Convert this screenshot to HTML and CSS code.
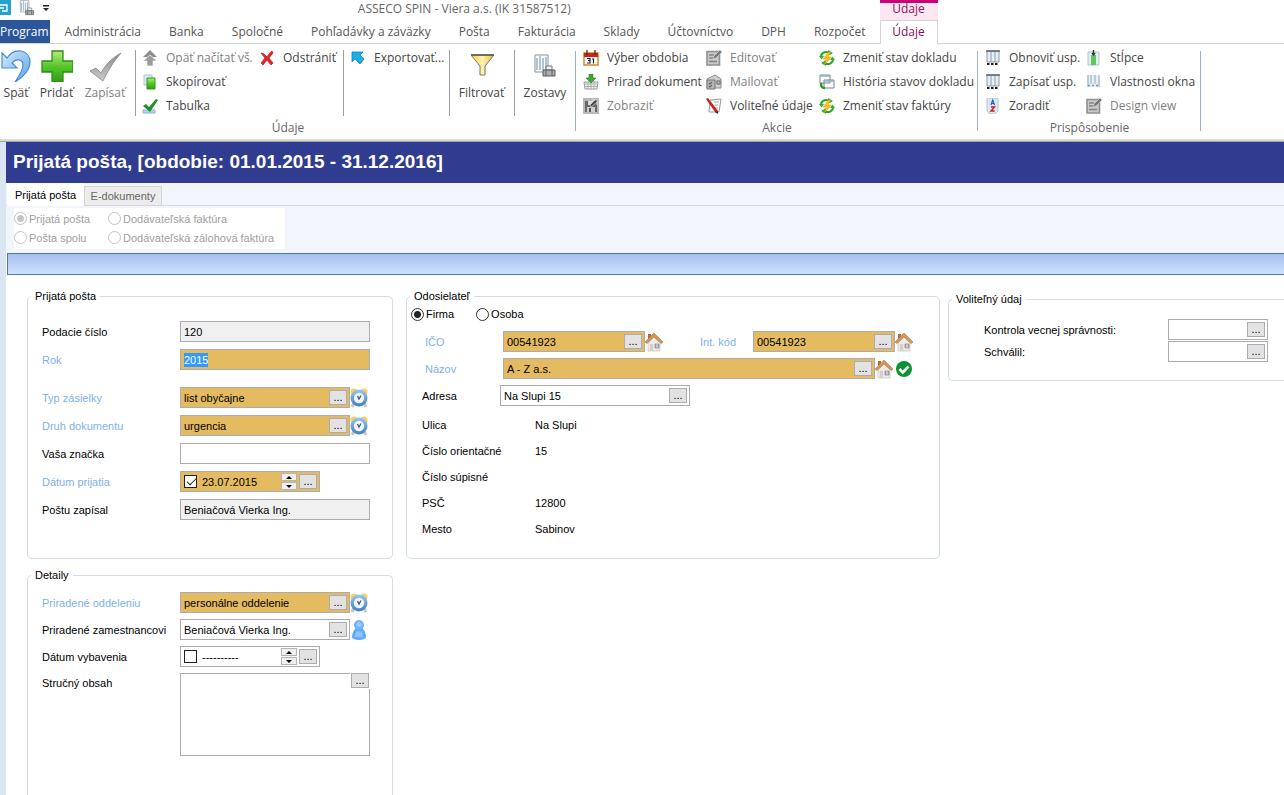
FILE: index.html
```html
<!DOCTYPE html>
<html lang="sk">
<head>
  <meta charset="UTF-8">
  <meta name="viewport" content="width=device-width, initial-scale=1.0">
  <title>ASSECO SPIN - Viera a.s.</title>
  <link rel="stylesheet" href="styles.css">
</head>
<body>
  <!-- Shared icons -->
  <svg class="icon-defs" aria-hidden="true">
    <defs>
      <linearGradient id="gGreen" x1="0" y1="0" x2="0" y2="1">
        <stop offset="0" stop-color="#b5ec7c"/><stop offset="0.5" stop-color="#56c52c"/><stop offset="1" stop-color="#2f9e12"/>
      </linearGradient>
      <linearGradient id="gBlue" x1="0" y1="0" x2="1" y2="1">
        <stop offset="0" stop-color="#d5ecff"/><stop offset="1" stop-color="#5aa5ea"/>
      </linearGradient>
      <linearGradient id="gGrey" x1="0" y1="0" x2="0" y2="1">
        <stop offset="0" stop-color="#8f8f8f"/><stop offset="1" stop-color="#c8c8c8"/>
      </linearGradient>
      <linearGradient id="gGold" x1="0" y1="0" x2="1" y2="0">
        <stop offset="0" stop-color="#f5cf3f"/><stop offset="0.5" stop-color="#fff3b5"/><stop offset="1" stop-color="#e9b92c"/>
      </linearGradient>
      <linearGradient id="gClock" x1="0" y1="0" x2="0" y2="1">
        <stop offset="0" stop-color="#9cc6ee"/><stop offset="1" stop-color="#3f7fc0"/>
      </linearGradient>
    </defs>
    <symbol id="i-clock" viewBox="0 0 18 20">
      <path d="M4 15l-2 4M14 15l2 4" stroke="#c3c6ca" stroke-width="3"/>
      <circle cx="4" cy="4" r="3.600" fill="#f9cf68"/>
      <circle cx="14" cy="4" r="3.600" fill="#f9cf68"/>
      <circle cx="9" cy="10" r="8.500" fill="url(#gClock)"/>
      <circle cx="9" cy="10" r="5.200" fill="#f1f7fc"/>
      <path d="M7.500 8l1.500 3 2-3.500" fill="none" stroke="#38597c" stroke-width="1.300"/>
    </symbol>
    <symbol id="i-house" viewBox="0 0 18 20">
      <path d="M3 2h3v6H3z" fill="#a86b3a"/>
      <path d="M3 9l6-5 6 5v10H3z" fill="#eceae8" stroke="#c5c1bc" stroke-width="0.7"/>
      <path d="M0 10L9 1l9 9-2 1.500L9 5l-7 6.500z" fill="#d39558" stroke="#ad7240" stroke-width="0.6"/>
      <path d="M5 12h3v7H5z" fill="#d3cfc9"/>
      <path d="M10 12h4v4h-4z" fill="#a9aeb5" stroke="#85878a" stroke-width="0.7"/>
      <path d="M12 12v4" stroke="#fff" stroke-width="0.6"/>
    </symbol>
    <symbol id="i-ok" viewBox="0 0 16 16">
      <circle cx="8" cy="8" r="8" fill="#0b9436"/>
      <path d="M3.500 8l3.200 3.500L12.500 5.500" fill="none" stroke="#fff" stroke-width="2.600"/>
    </symbol>
    <symbol id="i-person" viewBox="0 0 14 20">
      <path d="M7 6c3 0 7 6 7 11 0 4-14 4-14 0C0 12 4 6 7 6z" fill="#64aafc"/>
      <circle cx="7" cy="5" r="5" fill="#6fb1fb"/>
      <circle cx="7" cy="4.500" r="2.500" fill="#9dcbff"/>
      <path d="M3 17c0-4 1.500-6 4-6s4 2 4 6z" fill="#8fc3ff"/>
    </symbol>
    <symbol id="i-edit" viewBox="0 0 16 16">
      <path d="M1 1.500h12.500v13.500H1z" fill="#c9c9c9" stroke="#909090" stroke-width="1.600"/>
      <path d="M3 5h5M3 8h5M3 11.500h8" stroke="#858585" stroke-width="1.300"/>
      <path d="M7 9l1-3 6-6 2 2-6 6z" fill="#777" stroke="#e4e4e4" stroke-width="0.5"/>
    </symbol>
    <symbol id="i-state" viewBox="0 0 16 16">
      <path d="M2 7C2 3 6 1 10 2.500M14 9c0 4-4 6-8 4.500" fill="none" stroke="#23a823" stroke-width="2"/>
      <path d="M9 0l5 3-5 3zM7 16l-5-3 5-3zM0 6h5L2.500 9.500zM16 10h-5l2.500-3.500z" fill="#2fb32b"/>
      <path d="M9.500 2L4 9h3.500l-2 5.500L12.500 7H9l2.500-5z" fill="#ffc41f" stroke="#e09a18" stroke-width="0.6"/>
    </symbol>
    <symbol id="i-columns" viewBox="0 0 16 16">
      <path d="M2 1h12v11H2z" fill="#e3eef7" stroke="#8e99a5" stroke-width="1"/>
      <path d="M1 1h14" stroke="#414b56" stroke-width="1.200"/>
      <path d="M6 2v10M10 2v10" stroke="#8d9aa8"/>
      <path d="M2 14h12" stroke="#222" stroke-width="2" stroke-dasharray="2.500 1.500"/>
    </symbol>
    <symbol id="i-report" viewBox="0 0 24 24">
      <path d="M2 1h13v17H2z" fill="#fff" stroke="#8c9297"/>
      <path d="M4 4v12M7 2v14M10 4v12M13 3v13" stroke="#9fb4c6" stroke-width="1.600"/>
      <path d="M13 12h6v4h-6z" fill="#eef1f3" stroke="#777"/>
      <path d="M10 16h12v6H10z" fill="#a9adb0" stroke="#53585c"/>
      <path d="M13 16v6M19 16v6" stroke="#5d6265"/>
    </symbol>
  </svg>

  <!-- Title bar and ribbon tabs -->
  <header class="top">
    <div class="top-main">
      <div class="title-bar">
        <svg class="app-icon" viewBox="0 0 11 15"><path d="M0 0h11v15H0z" fill="#26a1cb"/><path d="M0 5h7v6H2M0 8h4" fill="none" stroke="#fff" stroke-width="1.300"/></svg>
        <svg class="quick-icon" viewBox="0 0 24 24"><use href="#i-report"/></svg>
        <svg class="more-icon" viewBox="0 0 6 7"><path d="M0 0h6v1.500H0zM0 3h6L3 6z" fill="#222"/></svg>
        <span class="title-text">ASSECO SPIN - Viera a.s. (IK 31587512)</span>
      </div>
      <nav class="tabs">
        <a class="tab program" href="#">Program</a>
        <a class="tab" href="#">Administrácia</a>
        <a class="tab" href="#">Banka</a>
        <a class="tab" href="#">Spoločné</a>
        <a class="tab" href="#">Pohľadávky a záväzky</a>
        <a class="tab" href="#">Pošta</a>
        <a class="tab" href="#">Fakturácia</a>
        <a class="tab" href="#">Sklady</a>
        <a class="tab" href="#">Účtovníctvo</a>
        <a class="tab" href="#">DPH</a>
        <a class="tab" href="#">Rozpočet</a>
      </nav>
    </div>
    <div class="context">
      <div class="context-title">Údaje</div>
      <a class="context-tab" href="#">Údaje</a>
    </div>
    <div class="top-rest"></div>
  </header>

  <!-- Ribbon -->
  <div class="ribbon">
    <section class="group">
      <div class="group-body">
        <div class="big-buttons">
          <button class="big back">
            <svg viewBox="0 0 32 32"><path d="M2 3v15h15l-5-5c4-5 11-4 11 2 0 6-4 11-8 17 9-5 15-13 15-20C30-1 14-3 7 8z" fill="url(#gBlue)" stroke="#4a8bd0" stroke-width="1.200"/></svg>
            Späť
          </button>
          <button class="big add">
            <svg viewBox="0 0 32 32"><path d="M11 1h11v10h10v11H22v10H11V22H1V11h10z" fill="url(#gGreen)" stroke="#2b8f16" stroke-width="1.300"/></svg>
            Pridať
          </button>
          <button class="big save" disabled>
            <svg viewBox="0 0 32 32"><path d="M1 21l6-3 5 5C17 14 23 8 32 3 25 11 19 20 14 31z" fill="url(#gGrey)" stroke="#858585" stroke-width="0.8"/></svg>
            Zapísať
          </button>
        </div>
        <div class="commands data-commands">
          <button class="cmd" disabled><svg viewBox="0 0 16 16"><path d="M8 0l7 7h-4v2H5V7H1z" fill="#8d8d8d"/><path d="M8 5l7 6h-4v5H5v-5H1z" fill="#9c9c9c" stroke="#fff" stroke-width="0.7"/></svg>Opäť načítať vš.</button>
          <button class="cmd"><svg viewBox="0 0 16 16"><path d="M2 3c3 0 5 3 6 4 2-3 3-5 5-6l1 2-4 5 4 5-2 2-4-5-4 5-2-2 4-5z" fill="#e02828" stroke="#b91818" stroke-width="0.7"/></svg>Odstrániť</button>
          <button class="cmd"><svg viewBox="0 0 16 16"><path d="M2 1h8v10H2z" fill="#dceaf6" stroke="#aac4dc"/><path d="M5 4h8v11H5z" fill="url(#gGreen)" stroke="#2b9a17"/></svg>Skopírovať</button>
          <span></span>
          <button class="cmd"><svg viewBox="0 0 16 16"><path d="M1 12h12v3H1z" fill="#b7d0ec" stroke="#8fb1d8"/><path d="M1 8l3-2 3 3 7-8 2 1-8 12z" fill="#1f8f28"/></svg>Tabuľka</button>
        </div>
        <div class="commands export-commands">
          <button class="cmd"><svg viewBox="0 0 16 16"><path d="M2 2h11l-3 3 4 4-4 5-5-5-3 3z" fill="#18aee8" stroke="#0c86bd" stroke-width="0.8"/></svg>Exportovať...</button>
        </div>
        <div class="big-buttons split filter-box">
          <button class="big"><svg viewBox="0 0 32 32"><path d="M5 5h23l-9 11v9h-5v-9z" fill="url(#gGold)" stroke="#777" stroke-width="1"/><path d="M5 5h23" stroke="#555" stroke-width="1.500"/></svg>Filtrovať</button>
        </div>
        <div class="big-buttons split report-box">
          <button class="big"><svg viewBox="-4 -4 32 32"><use href="#i-report" width="24" height="24"/></svg>Zostavy</button>
        </div>
      </div>
      <div class="group-name">Údaje</div>
    </section>

    <section class="group">
      <div class="group-body">
        <div class="commands action-commands">
          <button class="cmd"><svg viewBox="0 0 16 16"><path d="M1 3h14v12H1z" fill="#fff" stroke="#d28c22" stroke-width="1.500"/><path d="M1 3h14v4H1z" fill="#d3221c"/><path d="M4 0v5M12 0v5" stroke="#333" stroke-width="1.300"/><path d="M4 8.500h3v2H5h2v2.500H4M9 9h1.500v4.500" fill="none" stroke="#222" stroke-width="1.200"/></svg>Výber obdobia</button>
          <button class="cmd" disabled><svg viewBox="0 0 16 16"><use href="#i-edit"/></svg>Editovať</button>
          <button class="cmd"><svg viewBox="0 0 16 16"><use href="#i-state"/></svg>Zmeniť stav dokladu</button>
          <button class="cmd"><svg viewBox="0 0 16 16"><path d="M1 8h14l-1 7H2z" fill="#f3f3f3" stroke="#999"/><path d="M2 10h12M2 12.500h12M5 8v7M8 8v7M11 8v7" stroke="#a2a2a2" stroke-width="0.8"/><path d="M6 0h4v4h3L8 9 3 4h3z" fill="#3aa935" stroke="#23801f" stroke-width="0.6"/></svg>Priraď dokument</button>
          <button class="cmd" disabled><svg viewBox="0 0 16 16"><path d="M1 5l8-4 6 4v9H1z" fill="#cfcfcf" stroke="#8c8c8c"/><path d="M1 6h8v9H1z" fill="#b5b5b5" stroke="#777"/><path d="M3 9l1 1 2-2M3 12l1 1 2-2M11 7h3v3h-3z" fill="none" stroke="#666" stroke-width="1.100"/></svg>Mailovať</button>
          <button class="cmd"><svg viewBox="0 0 16 16"><path d="M1 1h10v8H1zM5 6h10v8H5z" fill="#fff" stroke="#78838d"/><path d="M1 2h10M5 7h10" stroke="#8fb1cf" stroke-width="1.500"/><path d="M2 9c0 4 1 5 4 5" fill="none" stroke="#1f9e2c" stroke-width="2.400"/></svg>História stavov dokladu</button>
          <button class="cmd" disabled><svg viewBox="0 0 16 16"><path d="M0 0h16v16H0z" fill="#b9b9b9"/><path d="M2 3h12v11H2z" fill="#686868"/><path d="M5 3h5v4H5z" fill="#ddd"/><path d="M4 9h8v5H4z" fill="#cfcfcf"/><path d="M7 7l5-5H9h5v5-3L8 9z" fill="#444" stroke="#e4e4e4" stroke-width="0.6"/><path d="M6 10h2v4H6z" fill="#555"/></svg>Zobraziť</button>
          <button class="cmd"><svg viewBox="0 0 16 16"><path d="M4 2l11-1-2 13H3z" fill="#fafafa" stroke="#999"/><path d="M8 4h5M9 7h3M9 10h3" stroke="#aaa"/><path d="M0 1l2-1 10 13-1 2-2-1z" fill="#c9211e"/><path d="M9 14l3-1 0 3z" fill="#333"/></svg>Voliteľné údaje</button>
          <button class="cmd"><svg viewBox="0 0 16 16"><use href="#i-state"/></svg>Zmeniť stav faktúry</button>
        </div>
      </div>
      <div class="group-name">Akcie</div>
    </section>

    <section class="group">
      <div class="group-body">
        <div class="commands view-commands">
          <button class="cmd"><svg viewBox="0 0 16 16"><use href="#i-columns"/></svg>Obnoviť usp.</button>
          <button class="cmd"><svg viewBox="0 0 16 16"><path d="M2 2h11v13H2z" fill="#e4edf5" stroke="#b5c4d2"/><path d="M5 5h5v10H5z" fill="#5dc957"/><path d="M7.500 0v5M6 3l1.500 2L9 3" fill="none" stroke="#333" stroke-width="1.300"/></svg>Stĺpce</button>
          <button class="cmd"><svg viewBox="0 0 16 16"><use href="#i-columns"/></svg>Zapísať usp.</button>
          <button class="cmd"><svg viewBox="0 0 16 16"><path d="M1 1h13v12H1z" fill="#e6eef6"/><path d="M2 1v12M5 1v9M9 1v9M13 1v12" stroke="#a9bacb" stroke-width="1.300"/><path d="M2 11.500h12" stroke="#8090a0" stroke-width="1.500" stroke-dasharray="2 2"/></svg>Vlastnosti okna</button>
          <button class="cmd"><svg viewBox="0 0 16 16"><path d="M2 0h11v13l-3 3H5l-3-3z" fill="#dde7f1" stroke="#b4c6d6"/><path d="M6 7l1.700-5L9.500 7M6.500 5.500h2.500" fill="none" stroke="#1f5fb5" stroke-width="1.200"/><path d="M6 9h3.500L6 13h3.500" fill="none" stroke="#c3201f" stroke-width="1.400"/></svg>Zoradiť</button>
          <button class="cmd" disabled><svg viewBox="0 0 16 16"><use href="#i-edit"/></svg>Design view</button>
        </div>
      </div>
      <div class="group-name">Prispôsobenie</div>
    </section>
  </div>

  <!-- Document window -->
  <main class="window">
    <h1>Prijatá pošta, [obdobie: 01.01.2015 - 31.12.2016]</h1>
    <div class="page-tabs">
      <button class="page-tab active">Prijatá pošta</button>
      <button class="page-tab">E-dokumenty</button>
    </div>
    <div class="kind-bar">
      <div class="kind-box">
        <label><input type="radio" name="kind" checked disabled>Prijatá pošta</label>
        <label><input type="radio" name="kind" disabled>Dodávateľská faktúra</label>
        <label><input type="radio" name="kind" disabled>Pošta spolu</label>
        <label><input type="radio" name="kind" disabled>Dodávateľská zálohová faktúra</label>
      </div>
    </div>
    <div class="blue-bar"></div>

    <form class="content">
      <div class="column">
        <fieldset class="panel mail">
          <legend>Prijatá pošta</legend>
          <div class="row">
            <label for="cislo">Podacie číslo</label>
            <div class="field wide readonly"><input id="cislo" type="text" value="120" readonly></div>
          </div>
          <div class="row required last-of-block">
            <label for="rok">Rok</label>
            <div class="field wide gold"><input id="rok" type="text" value="2015"></div>
          </div>
          <div class="row required">
            <label for="typ">Typ zásielky</label>
            <div class="field gold"><input id="typ" type="text" value="list obyčajne"><button type="button" class="dots">...</button></div>
            <svg class="side-icon"><use href="#i-clock"/></svg>
          </div>
          <div class="row required">
            <label for="druh">Druh dokumentu</label>
            <div class="field gold"><input id="druh" type="text" value="urgencia"><button type="button" class="dots">...</button></div>
            <svg class="side-icon"><use href="#i-clock"/></svg>
          </div>
          <div class="row">
            <label for="znacka">Vaša značka</label>
            <div class="field wide"><input id="znacka" type="text"></div>
          </div>
          <div class="row required">
            <label for="prijatie">Dátum prijatia</label>
            <div class="field date gold">
              <input type="checkbox" aria-label="Dátum prijatia zadaný" checked>
              <input id="prijatie" type="text" value="23.07.2015">
              <span class="spin"><button type="button" class="up" aria-label="Viac"></button><button type="button" class="down" aria-label="Menej"></button></span>
              <button type="button" class="dots">...</button>
            </div>
          </div>
          <div class="row">
            <label for="zapisal">Poštu zapísal</label>
            <div class="field wide readonly"><input id="zapisal" type="text" value="Beniačová Vierka Ing." readonly></div>
          </div>
        </fieldset>

        <fieldset class="panel details">
          <legend>Detaily</legend>
          <div class="row required">
            <label for="oddelenie">Priradené oddeleniu</label>
            <div class="field gold"><input id="oddelenie" type="text" value="personálne oddelenie"><button type="button" class="dots">...</button></div>
            <svg class="side-icon"><use href="#i-clock"/></svg>
          </div>
          <div class="row">
            <label for="zamestnanec">Priradené zamestnancovi</label>
            <div class="field"><input id="zamestnanec" type="text" value="Beniačová Vierka Ing."><button type="button" class="dots">...</button></div>
            <svg class="side-icon"><use href="#i-person"/></svg>
          </div>
          <div class="row">
            <label for="vybavenie">Dátum vybavenia</label>
            <div class="field date">
              <input type="checkbox" aria-label="Dátum vybavenia zadaný">
              <input id="vybavenie" type="text" value="----------">
              <span class="spin"><button type="button" class="up" aria-label="Viac"></button><button type="button" class="down" aria-label="Menej"></button></span>
              <button type="button" class="dots">...</button>
            </div>
          </div>
          <div class="row top-row">
            <label for="obsah">Stručný obsah</label>
            <div class="memo"><textarea id="obsah"></textarea><button type="button" class="dots">...</button></div>
          </div>
        </fieldset>
      </div>

      <fieldset class="panel sender">
        <legend>Odosielateľ</legend>
        <div class="who">
          <label><input type="radio" name="who" checked>Firma</label>
          <label><input type="radio" name="who">Osoba</label>
        </div>
        <div class="row required">
          <label for="ico">IČO</label>
          <div class="field code gold"><input id="ico" type="text" value="00541923"><button type="button" class="dots">...</button></div>
          <svg class="side-icon"><use href="#i-house"/></svg>
          <label class="second-label" for="kod">Int. kód</label>
          <div class="field code gold"><input id="kod" type="text" value="00541923"><button type="button" class="dots">...</button></div>
          <svg class="side-icon"><use href="#i-house"/></svg>
        </div>
        <div class="row required">
          <label for="nazov">Názov</label>
          <div class="field name gold"><input id="nazov" type="text" value="A - Z a.s."><button type="button" class="dots">...</button></div>
          <svg class="side-icon"><use href="#i-house"/></svg>
          <svg class="ok-icon"><use href="#i-ok"/></svg>
        </div>
        <div class="row address">
          <label for="adresa">Adresa</label>
          <div class="field wide"><input id="adresa" type="text" value="Na Slupi 15"><button type="button" class="dots">...</button></div>
        </div>
        <dl class="facts">
          <dt>Ulica</dt><dd>Na Slupi</dd>
          <dt>Číslo orientačné</dt><dd>15</dd>
          <dt>Číslo súpisné</dt><dd></dd>
          <dt>PSČ</dt><dd>12800</dd>
          <dt>Mesto</dt><dd>Sabinov</dd>
        </dl>
      </fieldset>

      <fieldset class="panel optional">
        <legend>Voliteľný údaj</legend>
        <div class="row">
          <label for="kontrola">Kontrola vecnej správnosti:</label>
          <div class="field short"><input id="kontrola" type="text"><button type="button" class="dots">...</button></div>
        </div>
        <div class="row">
          <label for="schvalil">Schválil:</label>
          <div class="field short"><input id="schvalil" type="text"><button type="button" class="dots">...</button></div>
        </div>
      </fieldset>
    </form>
  </main>

  <script>
    // The year is the first field to fill in
    const year = document.getElementById("rok");
    year.focus();
    year.select();
  </script>
</body>
</html>
```
FILE: styles.css
```css
/* General Reset */
* {
  margin: 0;
  padding: 0;
  box-sizing: border-box;
}

body {
  font-family: "Liberation Sans", Arial, sans-serif;
  font-size: 11px;
  line-height: 14px;
  color: #000;
  background-color: #fff;
  height: 100vh;
  overflow: hidden;
  display: flex;
  flex-direction: column;
}

button,
input,
textarea {
  font: inherit;
  color: inherit;
  border: none;
  background: none;
  outline: none;
}

a {
  color: inherit;
  text-decoration: none;
}

.icon-defs {
  position: absolute;
  width: 0;
  height: 0;
}

/* Title bar and tabs */
.top,
.ribbon {
  font-family: "Open Sans", "Noto Sans", sans-serif;
  font-size: 12px;
  line-height: 16px;
  color: #444;
}

.top {
  display: flex;
  height: 44px;
  flex-shrink: 0;
}

.top-main {
  display: flex;
  flex-direction: column;
  border-bottom: 1px solid #d5d5d5;
}

.top-rest {
  flex: 1;
  border-bottom: 1px solid #d5d5d5;
}

.title-bar {
  height: 20px;
  display: flex;
  align-items: flex-start;
}

.app-icon {
  width: 11px;
  height: 15px;
}

.quick-icon {
  width: 16px;
  height: 16px;
  margin-left: 8px;
}

.more-icon {
  width: 6px;
  height: 7px;
  margin: 5px 0 0 8px;
}

.title-text {
  flex: 1;
  text-align: center;
  line-height: 18px;
  color: #666;
}

.tabs {
  display: flex;
  height: 23px;
}

.tab {
  padding: 0 14px;
  line-height: 23px;
  color: #555;
  white-space: nowrap;
}

.tab.program {
  padding: 0 1px 0 0;
  margin-right: 1px;
  background-color: #2b579a;
  color: #fff;
}

.context {
  width: 58px;
  display: flex;
  flex-direction: column;
  text-align: center;
}

.context-title {
  height: 20px;
  border-top: 3px solid #cc0077;
  background-color: #fbe6f1;
  color: #8e1560;
  line-height: 12px;
}

.context-tab {
  flex: 1;
  border: 1px solid #d5d5d5;
  border-bottom: none;
  color: #8e0c5c;
  line-height: 22px;
}

/* Ribbon */
.ribbon {
  display: flex;
  flex-shrink: 0;
  height: 98px;
  padding-top: 2px;
  border-bottom: 1px solid #a5a5a5;
  box-shadow: inset 0 -2px #dadada;
}

.group {
  display: flex;
  flex-direction: column;
  position: relative;
}

.group::after {
  content: "";
  position: absolute;
  right: 0;
  top: 5px;
  height: 80px;
  border-right: 1px solid #9fb2ce;
}

.group-body {
  display: flex;
  height: 74px;
}

.group-name {
  text-align: center;
  color: #666;
}

.big-buttons {
  display: flex;
}

.big {
  display: flex;
  flex-direction: column;
  align-items: center;
  gap: 3px;
  padding-top: 4px;
}

.big svg {
  width: 32px;
  height: 32px;
}

.back {
  width: 32px;
}

.add {
  width: 49px;
}

.save {
  width: 48px;
  margin-right: 6px;
}

.filter-box {
  width: 65px;
  justify-content: center;
}

.report-box {
  width: 62px;
  justify-content: center;
}

.commands {
  display: grid;
  grid-auto-rows: 24px;
  padding-left: 7px;
}

.data-commands,
.export-commands,
.split {
  background: linear-gradient(#a0a0a0, #a0a0a0) no-repeat 0 4px / 1px 66px;
}

.data-commands {
  grid-template-columns: 117px 84px;
}

.export-commands {
  grid-template-columns: 99px;
}

.action-commands {
  grid-template-columns: 123px 113px 159px;
}

.view-commands {
  grid-template-columns: 101px 115px;
}

.cmd {
  display: flex;
  align-items: center;
  gap: 8px;
  white-space: nowrap;
}

.cmd svg {
  width: 16px;
  height: 16px;
  flex-shrink: 0;
}

.cmd:disabled,
.big:disabled {
  color: #7f7f7f;
}

/* Document window */
.window {
  flex: 1;
  min-height: 0;
  display: flex;
  flex-direction: column;
  border-left: 6px solid #d9e5f2;
}

h1 {
  flex-shrink: 0;
  height: 41px;
  padding-left: 7px;
  background-color: #303c90;
  color: #fff;
  font-size: 19px;
  line-height: 40px;
}

.page-tabs {
  display: flex;
  align-items: flex-end;
  flex-shrink: 0;
  height: 23px;
  padding-left: 1px;
  background-color: #f2f5fb;
  box-shadow: inset 0 -1px #d9d9d9;
}

.page-tab {
  width: 78px;
  height: 20px;
  border: 1px solid #d5d5d5;
  background-color: #ececec;
  color: #666;
}

.page-tab.active {
  width: 77px;
  height: 23px;
  border: none;
  background-color: #fff;
  color: #000;
}

.kind-bar {
  flex-shrink: 0;
  padding: 2px 8px 4px;
  background-color: #f2f5fb;
}

.kind-box {
  display: inline-grid;
  grid-template-columns: 94px auto;
  grid-auto-rows: 19px;
  padding: 1px 11px 2px 0;
  background-color: #fff;
  color: #a0a0a0;
  vertical-align: top;
}

.kind-box label,
.who label {
  display: flex;
  align-items: center;
  gap: 2px;
}

input[type="radio"] {
  appearance: none;
  width: 13px;
  height: 13px;
  border: 1px solid #333;
  border-radius: 50%;
  background-color: #fff;
}

input[type="radio"]:checked {
  background: radial-gradient(circle, #222 3px, #fff 4px);
}

input[type="radio"]:disabled {
  border-color: #c4c4c4;
}

input[type="radio"]:disabled:checked {
  background: radial-gradient(circle, #c4c4c4 3px, #fff 4px);
}

.blue-bar {
  flex-shrink: 0;
  height: 22px;
  margin-left: 1px;
  border: 1px solid #4a77b0;
  border-right: none;
  background: linear-gradient(#a5c0ee, #cfe1fc);
}

/* Form */
.content {
  flex: 1;
  min-height: 0;
  display: grid;
  grid-template-columns: 366px 534px minmax(0, 1fr);
  align-items: start;
  padding: 14px 0 0 21px;
}

.column {
  height: 100%;
  display: flex;
  flex-direction: column;
  gap: 9px;
}

.panel {
  border: 1px solid #d3dde6;
  border-radius: 5px;
  min-width: 0;
  padding-left: 3px;
}

legend {
  padding: 0 4px;
}

.mail {
  height: 270px;
  padding-top: 18px;
}

.details {
  flex: 1;
  padding-top: 10px;
  border-bottom: none;
  border-radius: 5px 5px 0 0;
}

.mail .row,
.details .row {
  margin-left: 11px;
}

.sender {
  height: 270px;
  margin-left: 13px;
  margin-right: -13px;
}

.optional {
  margin: 3px 0 0 21px;
  padding-top: 13px;
  padding-bottom: 17px;
  border-right: none;
  border-radius: 5px 0 0 5px;
}

.row {
  display: flex;
  align-items: center;
  margin-bottom: 7px;
}

.details .row {
  margin-bottom: 6px;
}

.row > label {
  width: 138px;
  white-space: nowrap;
}

.required > label {
  color: #7eb0ee;
}

.mail .last-of-block {
  margin-bottom: 17px;
}

.top-row {
  align-items: flex-start;
}

.top-row > label {
  padding-top: 3px;
}

.field {
  display: flex;
  align-items: center;
  width: 170px;
  height: 21px;
  padding: 0 2px 0 3px;
  border: 1px solid #ababb0;
  background-color: #fff;
}

.field input[type="text"] {
  flex: 1;
  min-width: 0;
  height: 14px;
}

.field.wide {
  width: 190px;
}

.field.gold {
  background-color: #e4bb60;
}

.field.readonly {
  background-color: #f0f0f0;
}

.field.date {
  width: 140px;
}

.field.code {
  width: 142px;
}

.field.name {
  width: 372px;
}

.field.short {
  width: 100px;
}

.field input::selection {
  background-color: #3399ff;
  color: #fff;
}

.dots {
  width: 18px;
  height: 15px;
  border: 1px solid #ababb0;
  background-color: #e2e2e2;
  line-height: 13px;
  text-align: center;
  flex-shrink: 0;
}

input[type="checkbox"] {
  appearance: none;
  width: 13px;
  height: 13px;
  margin-right: 5px;
  border: 1px solid #222;
  background-color: #fff;
  flex-shrink: 0;
}

input[type="checkbox"]:checked::before {
  content: "";
  display: block;
  width: 4px;
  height: 8px;
  margin: 0 0 0 4px;
  border: solid #222;
  border-width: 0 1px 1px 0;
  transform: rotate(45deg);
}

.spin {
  display: flex;
  flex-direction: column;
  gap: 1px;
  margin-right: 2px;
}

.spin button {
  display: flex;
  align-items: center;
  justify-content: center;
  width: 16px;
  height: 8px;
  border: 1px solid #b4b4b4;
  background-color: #f0f0f0;
}

.spin button::before {
  content: "";
  border: 3px solid transparent;
  border-top: none;
  border-bottom-color: #000;
}

.spin .down::before {
  transform: rotate(180deg);
}

.side-icon {
  width: 18px;
  height: 20px;
  flex-shrink: 0;
}

.ok-icon {
  width: 16px;
  height: 16px;
  margin-left: 3px;
}

.memo {
  position: relative;
  width: 190px;
}

.memo textarea {
  display: block;
  width: 100%;
  height: 83px;
  border: 1px solid #ababb0;
  resize: none;
}

.memo .dots {
  position: absolute;
  top: 0;
  right: 1px;
  box-shadow: 0 0 0 1px #fff;
}

/* Sender */
.who {
  display: flex;
  gap: 22px;
  padding: 4px 1px 10px;
}

.who label {
  min-width: 43px;
}

.sender .row {
  margin-bottom: 6px;
}

.sender .row > label {
  width: 93px;
  padding-left: 15px;
}

.sender .row > .second-label {
  width: 90px;
  padding-left: 37px;
}

.sender .address > label {
  width: 90px;
  padding-left: 12px;
}

.facts {
  display: grid;
  grid-template-columns: 113px 1fr;
  grid-auto-rows: 26px;
  align-items: center;
  padding: 0 12px;
}

/* Optional data */
.optional .row {
  margin: 0 0 1px 32px;
}

.optional .row > label {
  width: 184px;
}
```
